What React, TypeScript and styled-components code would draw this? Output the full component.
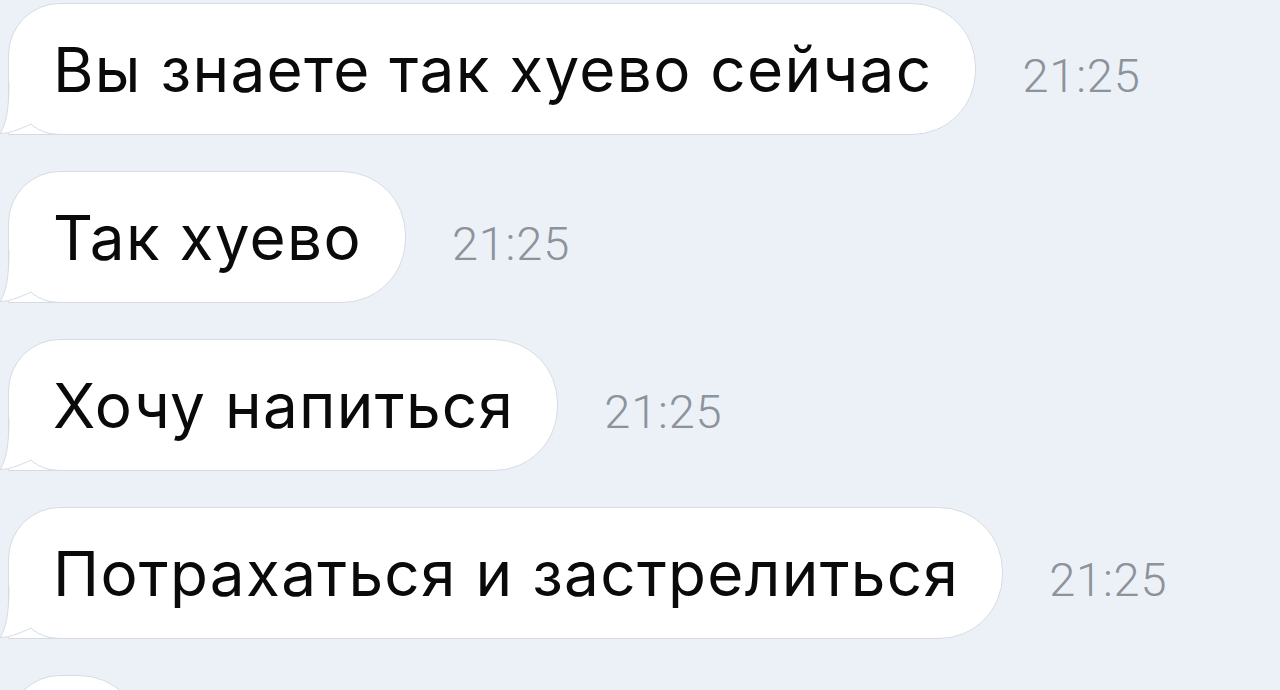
import styled, { createGlobalStyle } from 'styled-components';

const GlobalStyle = createGlobalStyle`
  html, body {
    margin: 0;
    padding: 0;
    background: #ecf1f8;
    overflow: hidden;
  }
`;

const Chat = styled.div`
  display: flex;
  flex-direction: column;
  gap: 36px;
  padding-top: 3px;
  height: 690px;
  overflow: hidden;
  background: #ecf1f8;
`;

const Row = styled.div`
  display: flex;
  align-items: baseline;
  gap: 46px;
`;

const Bubble = styled.div<{ $minWidth?: number }>`
  position: relative;
  margin-left: 8px;
  padding: 31px 43px 29px 44px;
  min-width: ${(p) => (p.$minWidth ? `${p.$minWidth}px` : 'auto')};
  background: #ffffff;
  border: 1px solid #d7dbe2;
  border-radius: 52px 64px 64px 0;
  font-family: Inter, 'Liberation Sans', Arial, sans-serif;
  font-size: 62px;
  line-height: 70px;
  letter-spacing: 1.3px;
  color: #0a0a0a;
  white-space: nowrap;
`;

const Text = styled.span`
  position: relative;
  z-index: 1;
`;

const Tail = styled.svg`
  position: absolute;
  left: -9px;
  bottom: -1px;
  width: 62px;
  height: 52px;
  overflow: visible;
`;

const Time = styled.span`
  font-family: Roboto, 'Liberation Sans', sans-serif;
  font-weight: 300;
  font-size: 47px;
  color: #8d939b;
  letter-spacing: 0.8px;
`;

function BubbleTail() {
  return (
    <Tail viewBox="0 0 62 52">
      <path d="M9 0 C9 26 6 42 0 50.5 C11 50.5 22 45 31 41 C39 48 48 51.5 62 51.5 L62 0 Z" fill="#ffffff" />
      <path
        d="M9 0 C9 26 6 42 0 50.5 C11 50.5 22 45 31 41 C39 48 48 51.5 62 51.5"
        fill="none"
        stroke="#d7dbe2"
        strokeWidth="1"
      />
    </Tail>
  );
}

const messages = [
  { text: 'Вы знаете так хуево сейчас', time: '21:25' },
  { text: 'Так хуево', time: '21:25' },
  { text: 'Хочу напиться', time: '21:25' },
  { text: 'Потрахаться и застрелиться', time: '21:25' },
];

export default function App() {
  return (
    <>
      <GlobalStyle />
      <Chat>
        {messages.map((m, i) => (
          <Row key={i}>
            <Bubble>
              <BubbleTail />
              <Text>{m.text}</Text>
            </Bubble>
            <Time>{m.time}</Time>
          </Row>
        ))}
        <Row>
          <Bubble $minWidth={46}>
            <BubbleTail />
            <Text>{'\u00a0'}</Text>
          </Bubble>
        </Row>
      </Chat>
    </>
  );
}
